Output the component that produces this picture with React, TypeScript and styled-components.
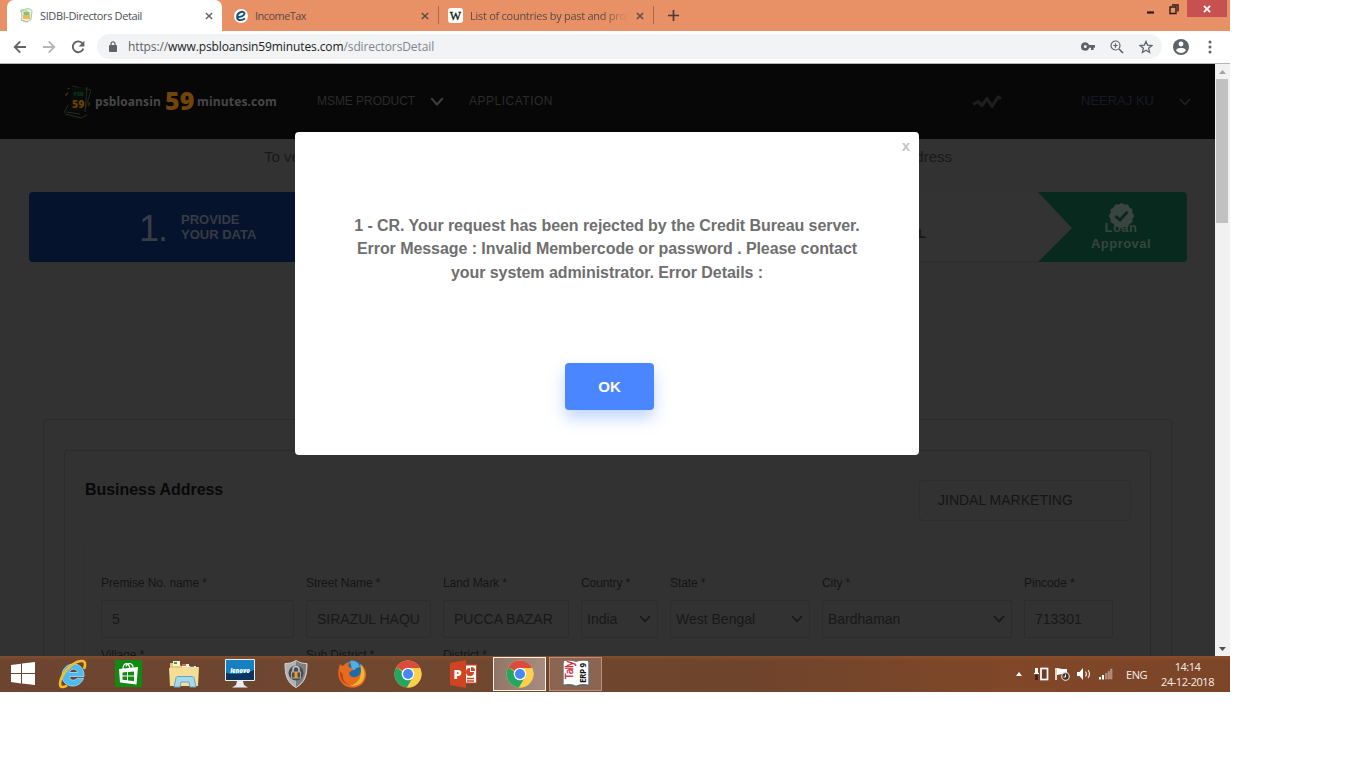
import React from 'react';
import styled, { createGlobalStyle } from 'styled-components';

const GlobalStyle = createGlobalStyle`
  * { box-sizing: border-box; }
  body { margin: 0; background: #fff; font-family: 'Liberation Sans', Arial, sans-serif; }
`;

const ui = `'Open Sans', 'Noto Sans', sans-serif`;

const Desktop = styled.div`
  width: 1230px;
  height: 692px;
  display: flex;
  flex-direction: column;
  overflow: hidden;
`;

/* ---------- browser chrome ---------- */
const TabStrip = styled.div`
  height: 31px;
  flex: none;
  display: flex;
  align-items: flex-start;
  background: #e99166;
  font-family: ${ui};
`;
const Tab = styled.div<{ $w: number; $active?: boolean; $pad: number }>`
  width: ${p => p.$w}px;
  height: 31px;
  margin-left: ${p => (p.$active ? 7 : 0)}px;
  padding: 0 9px 0 ${p => p.$pad}px;
  display: flex;
  align-items: center;
  background: ${p => (p.$active ? '#fff' : 'transparent')};
  border-radius: 7px 7px 0 0;
  svg { flex: none; display: block; }
`;
const TabTitle = styled.span<{ $ls?: number; $fade?: boolean; $light?: boolean }>`
  flex: 1;
  margin-left: 7px;
  margin-right: ${p => (p.$fade ? 8 : 0)}px;
  font-size: 11px;
  line-height: 16px;
  white-space: nowrap;
  overflow: hidden;
  letter-spacing: ${p => p.$ls ?? 0}px;
  color: ${p => (p.$light ? '#5b4a42' : '#4c4f54')};
  ${p => p.$fade && 'mask-image: linear-gradient(90deg, #000 84%, transparent);'}
`;
const TabDivider = styled.div`
  width: 1px;
  height: 18px;
  margin-top: 6px;
  background: #a9694b;
`;
const NewTab = styled.div`
  width: 38px;
  height: 31px;
  display: flex;
  align-items: center;
  justify-content: center;
`;
const WindowButtons = styled.div`
  margin-left: auto;
  margin-right: 3px;
  display: flex;
  align-items: center;
  height: 17px;
`;
const CloseWindow = styled.div`
  width: 40px;
  height: 17px;
  margin-left: 7px;
  background: #c75050;
  display: flex;
  align-items: center;
  justify-content: center;
`;
const Toolbar = styled.div`
  height: 33px;
  flex: none;
  display: flex;
  align-items: center;
  padding: 0 12px 1px 13px;
  background: #fff;
  border-bottom: 1px solid #b4b4b4;
  svg { flex: none; display: block; }
`;
const AddressBar = styled.div`
  width: 1065px;
  height: 25px;
  flex: none;
  margin-left: 12px;
  padding: 0 9px 0 12px;
  display: flex;
  align-items: center;
  background: #f1f3f4;
  border-radius: 13px;
  font-family: ${ui};
  font-size: 12px;
  color: #5f6368;
`;
const Url = styled.span`
  margin-left: 11px;
  flex: 1;
  letter-spacing: -0.11px;
  white-space: nowrap;
  b { font-weight: 400; color: #202124; }
  i { font-style: normal; color: #80868b; }
`;
const BarIcons = styled.div<{ $gap?: number; $left?: number }>`
  display: flex;
  align-items: center;
  gap: ${p => p.$gap ?? 15}px;
  margin-left: ${p => p.$left ?? 0}px;
`;

/* ---------- page ---------- */
const Viewport = styled.div`
  position: relative;
  height: 592px;
  flex: none;
  display: flex;
  overflow: hidden;
`;
const Page = styled.div`
  width: 1215px;
  height: 592px;
  overflow: hidden;
  background: #323232;
`;
const Header = styled.div`
  height: 75px;
  display: flex;
  align-items: center;
  padding: 0 24px 0 63px;
  background: #070707;
  font-size: 12px;
  color: #2b2b2b;
  svg { flex: none; display: block; }
`;
const Brand = styled.div`
  display: flex;
  align-items: center;
  width: 254px;
  font-family: ${ui};
  font-weight: 700;
  font-size: 12px;
  color: #484848;
  white-space: nowrap;
`;
const BrandWord = styled.span<{ $w: number; $ls: number }>`
  width: ${p => p.$w}px;
  letter-spacing: ${p => p.$ls}px;
`;
const BrandNumber = styled.span`
  width: 32px;
  font-size: 25px;
  line-height: 24px;
  padding-bottom: 3px;
  font-weight: 800;
  color: #704507;
`;
const NavItem = styled.span<{ $w: number; $ls: number; $left?: number }>`
  width: ${p => p.$w}px;
  margin-left: ${p => p.$left ?? 0}px;
  padding-bottom: 2px;
  letter-spacing: ${p => p.$ls}px;
  white-space: nowrap;
`;
const UserMenu = styled.div`
  margin-left: auto;
  display: flex;
  align-items: center;
  color: #171a26;
  font-size: 13px;
`;
const Intro = styled.div`
  display: flex;
  justify-content: space-between;
  padding: 9px 263px 0 264px;
  height: 53px;
  font-size: 15px;
  line-height: 18px;
  color: #191919;
`;
const Steps = styled.div`
  height: 70px;
  margin: 0 28px 0 29px;
  display: flex;
  border-radius: 4px;
  overflow: hidden;
`;
const StepProvide = styled.div`
  width: 420px;
  padding-left: 110px;
  display: flex;
  align-items: center;
  background: #06132d;
  color: #373b43;
`;
const StepNumber = styled.span`
  width: 42px;
  padding-top: 3px;
  font-size: 36px;
  line-height: 40px;
  letter-spacing: -1px;
  color: #383d45;
`;
const StepLabel = styled.span`
  font-weight: 700;
  font-size: 13px;
  line-height: 15px;
  padding-bottom: 1px;
`;
const StepMiddle = styled.div`
  flex: 1;
  display: flex;
  justify-content: flex-end;
  padding: 34px 112px 0 0;
  background: #333;
  border-bottom: 1px solid #2c2c2c;
  color: #161616;
`;
const StepApproval = styled.div`
  width: 149px;
  display: flex;
  background: #08291d;
`;
const ApprovalText = styled.div`
  width: 98px;
  padding-top: 11px;
  display: flex;
  flex-direction: column;
  align-items: center;
  color: #38453f;
  font-weight: 700;
  font-size: 13px;
  line-height: 16px;
  letter-spacing: 0.45px;
  text-align: center;
  span { margin-top: -9px; }
`;
const OuterCard = styled.div`
  margin: 157px 43px 0;
  height: 400px;
  padding: 30px 20px 0;
  border: 1px solid #2b2b2b;
  border-radius: 4px;
`;
const InnerCard = styled.div`
  height: 380px;
  padding: 29px 19px 0;
  border: 1px solid #2b2b2b;
  border-radius: 3px;
`;
const CardHead = styled.div`
  display: flex;
  justify-content: space-between;
  height: 61px;
`;
const CardTitle = styled.div`
  padding-left: 1px;
  font-weight: 700;
  font-size: 16px;
  line-height: 19px;
  letter-spacing: -0.05px;
  color: #090909;
`;
const BusinessSelect = styled.div`
  width: 212px;
  height: 41px;
  padding-left: 18px;
  border: 1px solid #2d2d2d;
  border-radius: 4px;
  font-size: 14px;
  line-height: 39px;
  color: #151515;
`;
const FormPanel = styled.div`
  padding: 33px 0 0 16px;
  height: 300px;
  border: 1px solid #303030;
  border-radius: 3px;
`;
const FieldGrid = styled.div`
  display: grid;
  grid-template-columns: 193px 125px 126px 77px 140px 190px 89px;
  column-gap: 12px;
  row-gap: 9px;
`;
const Label = styled.div`
  height: 16px;
  margin-bottom: 9px;
  font-size: 12px;
  line-height: 16px;
  letter-spacing: -0.08px;
  color: #151515;
  white-space: nowrap;
`;
const Control = styled.div<{ $select?: boolean }>`
  height: 38px;
  padding: 0 ${p => (p.$select ? '6px 0 5px' : '0 0 10px')};
  display: flex;
  align-items: center;
  justify-content: space-between;
  border: 1px solid #2c2c2c;
  border-radius: 2px;
  font-size: 14px;
  color: #181818;
  white-space: nowrap;
`;

const ScrollBar = styled.div`
  width: 15px;
  height: 592px;
  display: flex;
  flex-direction: column;
  align-items: center;
  background: #f1f1f1;
`;
const ScrollArrow = styled.div`
  height: 15px;
  display: flex;
  align-items: center;
`;
const ScrollThumb = styled.div`
  width: 12px;
  height: 144px;
  margin: 0 1px auto 0;
  background: #c1c1c1;
`;

/* ---------- dialog over the page ---------- */
const Dialog = styled.div`
  position: absolute;
  left: 295px;
  top: 68px;
  width: 624px;
  height: 323px;
  display: flex;
  flex-direction: column;
  align-items: center;
  background: #fff;
  border-radius: 4px;
`;
const DialogClose = styled.div`
  align-self: flex-end;
  height: 82px;
  padding: 5px 9px 0 0;
  font-size: 15px;
  line-height: 18px;
  font-weight: 700;
  color: #c4c4c4;
`;
const Message = styled.div`
  font-size: 16px;
  font-weight: 700;
  line-height: 23.4px;
  letter-spacing: -0.065px;
  color: #6f6f6f;
  text-align: center;
  white-space: nowrap;
`;
const OkButton = styled.button`
  width: 89px;
  height: 47px;
  margin: 79px 0 0 5px;
  border: 0;
  border-radius: 4px;
  background: #4a86ff;
  color: #fff;
  font: 700 15px 'Liberation Sans', Arial, sans-serif;
  box-shadow: 0 8px 16px rgba(74, 134, 255, 0.35);
`;

/* ---------- taskbar ---------- */
const Taskbar = styled.div`
  height: 36px;
  flex: none;
  display: flex;
  align-items: center;
  background: linear-gradient(180deg, rgba(150, 85, 45, 0.5), transparent 5px),
    linear-gradient(90deg, #6c4430, #70482f 35%, #6e442c 60%, #804728 82%, #7c4528);
`;
const TaskItem = styled.div<{ $w?: number }>`
  width: ${p => p.$w ?? 56}px;
  height: 36px;
  padding-bottom: 1px;
  display: flex;
  align-items: center;
  justify-content: center;
  svg { display: block; }
`;
const OpenTask = styled.div<{ $focus?: boolean }>`
  width: 53px;
  height: 34px;
  margin: 0 0 0 ${p => (p.$focus ? 2 : 3)}px;
  display: flex;
  align-items: center;
  justify-content: center;
  background: ${p => (p.$focus ? 'linear-gradient(90deg, #917667, #a68d80)' : '#8b6552')};
  border: 1px solid ${p => (p.$focus ? '#fff1e7' : '#b8927d')};
`;
const Tray = styled.div`
  margin-left: auto;
  padding-right: 16px;
  display: flex;
  align-items: center;
  font-family: ${ui};
  font-size: 11px;
  color: #f6eeea;
  svg { display: block; }
`;
const Language = styled.span`
  margin-left: 13px;
  width: 35px;
  letter-spacing: -0.5px;
`;
const Clock = styled.div`
  display: flex;
  flex-direction: column;
  align-items: center;
  line-height: 15px;
  letter-spacing: -0.45px;
`;

const Cross = ({ c = '#5a4a44', s = 8, w = 1.6 }: { c?: string; s?: number; w?: number }) => (
  <svg width={s} height={s} viewBox="0 0 9 9"><path d="M1 1l7 7M8 1L1 8" stroke={c} strokeWidth={w} /></svg>
);
const Chevron = ({ c, w = 12, sw = 1.6 }: { c: string; w?: number; sw?: number }) => (
  <svg width={w} height={w * 0.66} viewBox="0 0 12 8"><path d="M1 1l5 5.5L11 1" fill="none" stroke={c} strokeWidth={sw} /></svg>
);

const NotesIcon = () => (
  <svg width="14" height="15" viewBox="0 0 14 15">
    <path d="M2 2l8-1.500 3 2-1 9-5 2.500-5-2 1-3z" fill="#eef4d9" stroke="#a8cda4" />
    <path d="M1 3l8 0M2 12l7 2" stroke="#a9c58d" />
    <rect x="4.500" y="4" width="6" height="3" fill="#86bf80" />
    <rect x="4" y="7" width="7" height="4" fill="#eebb5c" />
  </svg>
);
const TaxIcon = () => (
  <svg width="14" height="14" viewBox="0 0 14 14">
    <circle cx="7" cy="7" r="7" fill="#fff" />
    <path d="M3.200 8.100C6 8 9.400 7.200 10.400 5.200 11 3.500 9 2.400 7 3 4.700 3.700 3 6 3.100 8.400 3.300 11.600 7.600 12 11 9.500" fill="none" stroke="#164f7c" strokeWidth="1.900" />
  </svg>
);
const WikiIcon = () => (
  <svg width="15" height="15" viewBox="0 0 15 15">
    <rect width="15" height="15" rx="3" fill="#fff" />
    <text x="7.500" y="11.500" textAnchor="middle" fontFamily="Liberation Serif, serif" fontSize="12" stroke="#111" strokeWidth=".3" fill="#111">W</text>
  </svg>
);
const BackIcon = ({ c, flip }: { c: string; flip?: boolean }) => (
  <svg width="14" height="14" viewBox="0 0 14 14" transform={flip ? 'scale(-1 1)' : undefined}>
    <path d="M13 7H2M7.300 1.300L1.700 7l5.600 5.700" fill="none" stroke={c} strokeWidth="1.800" />
  </svg>
);
const ReloadIcon = () => (
  <svg width="14" height="14" viewBox="0 0 14 14">
    <path d="M11.500 3.500A5.400 5.400 0 1 0 12.300 8.600" fill="none" stroke="#5f6368" strokeWidth="1.900" />
    <path d="M13.400 .8v5.800H7.600z" fill="#5f6368" />
  </svg>
);
const LockIcon = () => (
  <svg width="8" height="11" viewBox="0 0 8 11">
    <rect y="4" width="8" height="7" rx="1" fill="#5f6368" />
    <path d="M2 4.500V2.800a2 2 0 0 1 4 0v1.700" fill="none" stroke="#5f6368" strokeWidth="1.200" />
  </svg>
);
const KeyIcon = () => (
  <svg width="14" height="9" viewBox="0 0 14 9">
    <path fillRule="evenodd" fill="#5f6368" d="M4.300.3a4.200 4.200 0 1 0 3.900 5.500H10V8h2.600V5.800H14V2.900H8.200A4.200 4.200 0 0 0 4.300.3zm0 2.700a1.500 1.500 0 1 1 0 3 1.500 1.500 0 0 1 0-3z" />
  </svg>
);
const ZoomIcon = () => (
  <svg width="14" height="14" viewBox="0 0 14 14" fill="none" stroke="#5f6368">
    <circle cx="5.500" cy="5.500" r="4.500" strokeWidth="1.200" />
    <path d="M9 9l4 4" strokeWidth="1.700" />
    <path d="M3.300 5.500h4.400M5.500 3.300v4.400" strokeWidth="1.200" />
  </svg>
);
const StarIcon = () => (
  <svg width="14" height="14" viewBox="0 0 14 14">
    <path d="M7 1.400l1.650 3.850 4.150.35-3.150 2.750.95 4.100L7 10.300l-3.600 2.150.95-4.100L1.200 5.600l4.150-.35z" fill="none" stroke="#5f6368" strokeWidth="1.300" />
  </svg>
);
const ProfileIcon = () => (
  <svg width="16" height="16" viewBox="0 0 16 16">
    <circle cx="8" cy="8" r="8" fill="#5f6368" />
    <circle cx="8" cy="5" r="2.400" fill="#fff" />
    <path d="M3 11.300C4 9 6.300 8.900 8 8.900s4 .1 5 2.400A6 6 0 0 1 3 11.300z" fill="#fff" />
  </svg>
);

const BrandMark = () => (
  <svg width="32" height="36" viewBox="0 0 32 36" fill="none">
    <path d="M9 2l19 4-6 20" stroke="#20291a" strokeWidth="1" />
    <path d="M24 3l-2 25M5 8l-2 4M4 5l3 -1M1 29l4-8M2 30l16 4 6-3M3 28l14 2" stroke="#26301a" strokeWidth="1" />
    <path d="M9 4l13-1-2 24-14 0z" fill="#070d08" />
    <text x="10.500" y="12" fontFamily="Open Sans, sans-serif" fontWeight="700" fontSize="5.500" fill="#103820">PSB</text>
    <text x="9" y="23.500" fontFamily="Open Sans, sans-serif" fontWeight="800" fontSize="10.500" fill="#6b4108">59</text>
    <path d="M25 18l2 2-2 2M2 11l3-2" stroke="#4a3a12" />
  </svg>
);
const ZigZag = () => (
  <svg width="32" height="16" viewBox="0 0 32 16">
    <path d="M2 10.500l5-3 4 4 5-7 5 8 6-9.500 3 2" fill="none" stroke="#1e1e1e" strokeWidth="3.200" strokeLinejoin="round" />
  </svg>
);
const Seal = () => (
  <svg width="27" height="26" viewBox="0 0 27 26">
    <path d="M13.500 0l3 1.600 3.400-.1 1.600 3 2.900 1.800-.1 3.400L26.500 13l-2.200 2.900.1 3.400-2.900 1.800-1.600 3-3.400-.1-3 1.600-3-1.600-3.400.1-1.600-3-2.900-1.800.1-3.400L.5 13l2.200-3.300-.1-3.400 2.900-1.800 1.600-3 3.400.1z" fill="#3a4541" />
    <path d="M7.500 13l4.500 4L19.500 8.800" fill="none" stroke="#08291d" strokeWidth="3" />
  </svg>
);

const StartIcon = () => (
  <svg width="24" height="23" viewBox="0 0 24 23" fill="#fff">
    <path d="M0 3l10-1.300V11H0zM11 1.500L24 0v11H11zM0 12h10v9.500L0 20zM11 12h13v11l-13-1.500z" />
  </svg>
);
const IeIcon = () => (
  <svg width="30" height="30" viewBox="0 0 30 30">
    <path fillRule="evenodd" d="M26 17.500H11.500c.5 4.300 5.500 4.800 7.500 1.800h6.500c-2 5-6 7.700-10.500 7.700C8 27 4 22.500 4 16.500S8.500 5 15.500 5 26.500 10.500 26 17.500zM11.500 13.500h8c-.5-4.500-7.300-4.500-8 0z" fill="#4cbcf0" stroke="#a4e3fa" strokeWidth=".8" />
    <path d="M26 10c2-5 1.500-8.500-3-8C13 3 2 17 2 25c0 4 4 3.500 7 1.500" fill="none" stroke="#f5bd2c" strokeWidth="2.600" />
  </svg>
);
const StoreIcon = () => (
  <svg width="27" height="27" viewBox="0 0 27 27">
    <rect width="27" height="27" fill="#108a10" />
    <path d="M4 9l19-2-1.500 17.500L5 22.500z" fill="#fff" />
    <path d="M8 9c0-7 6-7 7 0M11 6.500c1-4.500 7-3.500 7 1" fill="none" stroke="#fff" strokeWidth="1.300" />
    <path d="M7.500 12.500l4.500-.4v3.500H7.500zM13 12l6-.5v4.100h-6zM7.500 16.600H12v3.600l-4.500-.4zM13 16.600h6V21l-6-.6z" fill="#108a10" />
  </svg>
);
const FolderIcon = () => (
  <svg width="30" height="28" viewBox="0 0 30 28">
    <path d="M1 3h9l2 3h15v19H1z" fill="#e6c979" />
    <path d="M4 1h7v5H4zM13 4h7v4h-7zM20 6h7v4h-7z" fill="#f6f2da" />
    <path d="M5 2h3v2H5z" fill="#3f9c50" /><path d="M13 4h4v2h-4z" fill="#e06b3c" /><path d="M21 6h4v2h-4z" fill="#3a85c6" />
    <path d="M0 8h12l2-1h16l-1 19H1z" fill="#f4dd96" />
    <path d="M5 27l2-9c0-1 1-1.500 2-1.500h14c1 0 2 .5 2 1.500l2 9h-6l-1-5h-8l-1 5z" fill="#a7d8ec" stroke="#5fa7c7" />
  </svg>
);
const LenovoIcon = () => (
  <svg width="30" height="29" viewBox="0 0 30 29">
    <rect width="30" height="22" rx="1" fill="#e8f0f5" />
    <rect x="1" y="1" width="28" height="20" fill="#1681c0" />
    <path d="M1 14q14 3 28-3v10H1z" fill="#0b3561" />
    <text x="15" y="13.500" textAnchor="middle" fontFamily="Open Sans, sans-serif" fontStyle="italic" fontWeight="800" fontSize="6" fill="#fff">lenovo</text>
    <path d="M12 22h6l1 4 4 2.500H7L11 26z" fill="#e9edf0" />
  </svg>
);
const ShieldIcon = () => (
  <svg width="24" height="28" viewBox="0 0 24 28">
    <path d="M12 .5c4 2.500 7 3 11 3 0 12-2 19-11 24C3 22.500 1 15.500 1 3.500c4 0 7-.5 11-3z" fill="#b1b3b4" stroke="#d2d3d4" />
    <path d="M12 1c4 2.500 7 3 10 3 0 11-2 18-10 23z" fill="#7c7e80" />
    <circle cx="12" cy="13" r="7.500" fill="#4a4b4d" />
    <path d="M9 12V9.500c0-4 6-4 6 0V12" fill="none" stroke="#c7c9ca" strokeWidth="1.500" />
    <rect x="7.500" y="12" width="9" height="6" fill="#4b4b4c" stroke="#a6a7a8" /><rect x="10.500" y="12" width="3" height="6" fill="#ef9a25" />
  </svg>
);
const FirefoxIcon = () => (
  <svg width="28" height="28" viewBox="0 0 28 28">
    <circle cx="15" cy="12" r="11.500" fill="#1c6ca7" />
    <path d="M12 1c5-1 9 2 10 6-4 0-5 4-8 3z" fill="#57aede" />
    <path d="M2 4c1 2 3 2 4 1 3-3 6-3 7-3-3 2-3 4-2 5l4 2c0 2-3 2-4 4 1 5 7 6 11 1 2-3 2-7 1-10 7 6 6 15 1 20-7 6-16 4-20-1C-1 18 0 11 2 4z" fill="#e66b1d" />
    <path d="M22 4c6 6 6 14 1 19-4 3-8 3-11 3 9-3 13-10 10-22z" fill="#f5b332" />
    <path d="M2 11c-1 8 4 13 10 14-5-2-8-6-7-10z" fill="#c63b1a" />
  </svg>
);
const ChromeIcon = () => (
  <svg width="28" height="28" viewBox="0 0 28 28">
    <circle cx="14" cy="14" r="13.500" fill="#fbd04b" />
    <path d="M14 14L2.300 7.300A13.500 13.500 0 0 1 26 8H14z" fill="#dd4b3e" />
    <path d="M2.300 7.300A13.500 13.500 0 0 0 13 27.500L19 17l-5-1z" fill="#25a562" />
    <path d="M26 8a13.500 13.500 0 0 1-13 19.500L19.500 17V8z" fill="#fbd04b" />
    <circle cx="14" cy="14" r="6.300" fill="#fff" /><circle cx="14" cy="14" r="5" fill="#4687f4" />
  </svg>
);
const PowerPointIcon = () => (
  <svg width="27" height="28" viewBox="0 0 27 28">
    <rect x="14" y="5" width="12.500" height="18" fill="#fff" stroke="#d04423" />
    <path d="M20 8a4 4 0 1 0 4 4h-4z" fill="#d04423" /><path d="M21 7a4 4 0 0 1 4 4h-4z" fill="#d04423" />
    <path d="M17 18.500h7M17 21h7" stroke="#d04423" strokeWidth="1.300" />
    <path d="M0 3l16-3v28L0 25z" fill="#d04423" />
    <text x="3.500" y="18.500" fontFamily="Open Sans, sans-serif" fontWeight="800" fontSize="13" fill="#fff">P</text>
  </svg>
);
const TallyIcon = () => (
  <svg width="28" height="28" viewBox="0 0 28 28">
    <path d="M1 3l2-2v24H1zM27 3l-2-2v24h2z" fill="#7ba0ae" />
    <path d="M2 1q8-1 12 1 4-2 12-1v24q-8-1-12 1-4-2-12-1z" fill="#fff" />
    <path d="M1 25.500q8-2 13 1 5-3 13-1" fill="none" stroke="#5f6b70" strokeWidth="1.400" />
    <text transform="translate(11 19) rotate(-90)" fontFamily="Open Sans, sans-serif" fontSize="10" textLength="18" stroke="#c82030" strokeWidth=".3" fill="#c82030">Tally</text>
    <text transform="translate(24 23) rotate(-90)" fontFamily="Open Sans, sans-serif" fontSize="8" fontWeight="700" textLength="20" fill="#111">ERP 9</text>
  </svg>
);
const TrayIcons = () => (
  <svg width="98" height="16" viewBox="0 0 98 16">
    <path d="M1 10l3-4 3 4z" fill="#fff" />
    <path d="M21.500 2v5" stroke="#fff" strokeWidth="3" /><path d="M21.500 7v7" stroke="#3a1d14" strokeWidth="2.500" /><path d="M19 7.500h5" stroke="#fff" strokeWidth="1.300" />
    <rect x="26" y="2.500" width="6.500" height="11" fill="#6b3c29" stroke="#fff" strokeWidth="1.700" />
    <path d="M41 2v12" stroke="#fff" strokeWidth="1.500" /><path d="M42 2l5 1 5 0v6l-5-1-5 1z" fill="#fff" />
    <circle cx="50.500" cy="10.500" r="3.800" fill="#43302a" stroke="#ddd3ce" strokeWidth="1.200" /><path d="M50.500 8.500v2.500h-2" fill="none" stroke="#fff" />
    <path d="M62 6h2.500l3.500-4v12l-3.500-4H62z" fill="#fff" /><path d="M70.500 5.500q1.800 2.500 0 5M73 4q3 4 0 8" fill="none" stroke="#f7efeb" strokeWidth="1.100" />
    <rect x="84" y="11" width="2" height="2.500" fill="#fff" /><rect x="87" y="9" width="2" height="4.500" fill="#fff" />
    <path d="M90.500 7.500h1.500v5.500h-1.500zM93 5.500h1.500V13H93zM95.500 3H97v10h-1.500z" fill="#9d8071" stroke="#c8b2a7" strokeWidth=".5" />
  </svg>
);

type FieldData = { label: string; value?: string; select?: boolean };
const fields: FieldData[] = [
  { label: 'Premise No. name *', value: '5' },
  { label: 'Street Name *', value: 'SIRAZUL HAQU' },
  { label: 'Land Mark *', value: 'PUCCA BAZAR' },
  { label: 'Country *', value: 'India', select: true },
  { label: 'State *', value: 'West Bengal', select: true },
  { label: 'City *', value: 'Bardhaman', select: true },
  { label: 'Pincode *', value: '713301' },
  { label: 'Village *' },
  { label: 'Sub District *' },
  { label: 'District *' },
];

const Field = ({ label, value, select }: FieldData) => (
  <div>
    <Label>{label}</Label>
    {value && <Control $select={select}>{value}{select && <Chevron c="#161616" />}</Control>}
  </div>
);

export default function App() {
  return (
    <Desktop>
      <GlobalStyle />
      <TabStrip>
        <Tab $w={215} $pad={12} $active>
          <NotesIcon /><TabTitle $ls={-0.38}>SIDBI-Directors Detail</TabTitle><Cross c="#5f6368" />
        </Tab>
        <Tab $w={216} $pad={12}><TaxIcon /><TabTitle $light $ls={-0.55}>IncomeTax</TabTitle><Cross /></Tab>
        <TabDivider />
        <Tab $w={214} $pad={9}><WikiIcon /><TabTitle $light $fade $ls={-0.27}>List of countries by past and projected GDP</TabTitle><Cross /></Tab>
        <TabDivider />
        <NewTab><svg width="11" height="11"><path d="M5.500 0v11M0 5.500h11" stroke="#493c37" strokeWidth="1.700" /></svg></NewTab>
        <WindowButtons>
          <svg width="34" height="12" viewBox="0 0 34 12"><path d="M1 9.500h7" stroke="#2d1c15" strokeWidth="2.200" /><path d="M24 4h6v6.500h-6zM26 2h6v6.500" fill="none" stroke="#2d1c15" strokeWidth="1.400" /></svg>
          <CloseWindow><Cross c="#fff" s={8} w={1.800} /></CloseWindow>
        </WindowButtons>
      </TabStrip>
      <Toolbar>
        <BarIcons><BackIcon c="#5f6368" /><BackIcon c="#b5b7ba" flip /><ReloadIcon /></BarIcons>
        <AddressBar>
          <LockIcon />
          <Url>https://<b>www.psbloansin59minutes.com</b><i>/sdirectorsDetail</i></Url>
          <BarIcons><KeyIcon /><ZoomIcon /><StarIcon /></BarIcons>
        </AddressBar>
        <BarIcons $left={11} $gap={19}>
          <ProfileIcon />
          <svg width="4" height="14"><g fill="#5f6368"><circle cx="2" cy="2" r="1.500" /><circle cx="2" cy="7" r="1.500" /><circle cx="2" cy="12" r="1.500" /></g></svg>
        </BarIcons>
      </Toolbar>

      <Viewport>
        <Page>
          <Header>
            <Brand>
              <BrandMark />
              <BrandWord $w={70} $ls={0.1}>psbloansin</BrandWord>
              <BrandNumber>59</BrandNumber>
              <BrandWord $w={80} $ls={0.15}>minutes.com</BrandWord>
            </Brand>
            <NavItem $w={113} $ls={-0.05}>MSME PRODUCT</NavItem>
            <Chevron c="#3e3e3e" w={14} sw={1.800} />
            <NavItem $w={90} $ls={0.5} $left={25}>APPLICATION</NavItem>
            <UserMenu>
              <ZigZag />
              <NavItem $w={98} $ls={0} $left={78}>NEERAJ KU</NavItem>
              <Chevron c="#222" w={12} />
            </UserMenu>
          </Header>
          <Intro><span>To verify</span><span>address</span></Intro>
          <Steps>
            <StepProvide><StepNumber>1.</StepNumber><StepLabel>PROVIDE<br />YOUR DATA</StepLabel></StepProvide>
            <StepMiddle><StepLabel>APPROVAL</StepLabel></StepMiddle>
            <StepApproval>
              <svg width="34" height="70" viewBox="0 0 34 70"><path d="M0 0l34 36L0 70z" fill="#333" /></svg>
              <ApprovalText><Seal /><span>Loan<br />Approval</span></ApprovalText>
            </StepApproval>
          </Steps>
          <OuterCard>
            <InnerCard>
              <CardHead><CardTitle>Business Address</CardTitle><BusinessSelect>JINDAL MARKETING</BusinessSelect></CardHead>
              <FormPanel>
                <FieldGrid>{fields.map(f => <Field key={f.label} {...f} />)}</FieldGrid>
              </FormPanel>
            </InnerCard>
          </OuterCard>
        </Page>
        <ScrollBar>
          <ScrollArrow><svg width="7" height="4"><path d="M0 4l3.500-4L7 4z" fill="#a3a3a3" /></svg></ScrollArrow>
          <ScrollThumb />
          <ScrollArrow><svg width="7" height="4"><path d="M0 0l3.500 4L7 0z" fill="#505050" /></svg></ScrollArrow>
        </ScrollBar>
        <Dialog role="dialog">
          <DialogClose>x</DialogClose>
          <Message>
            1 - CR. Your request has been rejected by the Credit Bureau server.<br />
            Error Message : Invalid Membercode or password . Please contact<br />
            your system administrator. Error Details :
          </Message>
          <OkButton>OK</OkButton>
        </Dialog>
      </Viewport>

      <Taskbar>
        <TaskItem $w={45}><StartIcon /></TaskItem>
        <TaskItem><IeIcon /></TaskItem>
        <TaskItem $w={55}><StoreIcon /></TaskItem>
        <TaskItem><FolderIcon /></TaskItem>
        <TaskItem><LenovoIcon /></TaskItem>
        <TaskItem><ShieldIcon /></TaskItem>
        <TaskItem><FirefoxIcon /></TaskItem>
        <TaskItem $w={55}><ChromeIcon /></TaskItem>
        <TaskItem><PowerPointIcon /></TaskItem>
        <OpenTask $focus><ChromeIcon /></OpenTask>
        <OpenTask><TallyIcon /></OpenTask>
        <Tray>
          <TrayIcons />
          <Language>ENG</Language>
          <Clock><span>14:14</span><span>24-12-2018</span></Clock>
        </Tray>
      </Taskbar>
    </Desktop>
  );
}
